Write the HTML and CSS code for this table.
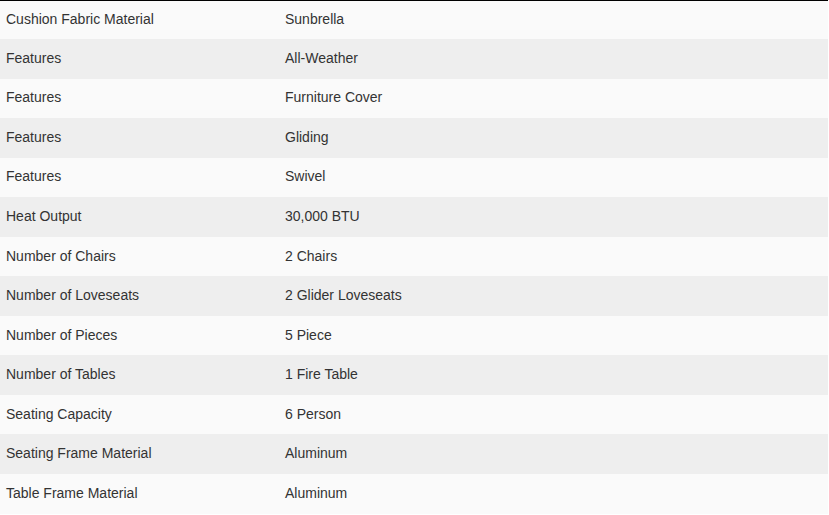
FILE: index.html
```html
<!DOCTYPE html>
<html>
<head>
<meta charset="utf-8">
<link rel="stylesheet" href="styles.css">
</head>
<body>
<table class="specs">
<tbody>
<tr><td class="k">Cushion Fabric Material</td><td>Sunbrella</td></tr>
<tr><td class="k">Features</td><td>All-Weather</td></tr>
<tr><td class="k">Features</td><td>Furniture Cover</td></tr>
<tr><td class="k">Features</td><td>Gliding</td></tr>
<tr><td class="k">Features</td><td>Swivel</td></tr>
<tr><td class="k">Heat Output</td><td>30,000 BTU</td></tr>
<tr><td class="k">Number of Chairs</td><td>2 Chairs</td></tr>
<tr><td class="k">Number of Loveseats</td><td>2 Glider Loveseats</td></tr>
<tr><td class="k">Number of Pieces</td><td>5 Piece</td></tr>
<tr><td class="k">Number of Tables</td><td>1 Fire Table</td></tr>
<tr><td class="k">Seating Capacity</td><td>6 Person</td></tr>
<tr><td class="k">Seating Frame Material</td><td>Aluminum</td></tr>
<tr><td class="k">Table Frame Material</td><td>Aluminum</td></tr>
</tbody>
</table>
</body>
</html>
```
FILE: styles.css
```css
html, body {
  margin: 0;
  padding: 0;
  background: #fff;
}
.specs {
  width: 828px;
  border-collapse: collapse;
  border-top: 1px solid #000;
  font-family: "Liberation Sans", Arial, sans-serif;
  font-size: 14px;
  color: #333;
}
.specs tr {
  background: #fafafa;
}
.specs tr:nth-child(even) {
  background: #eeeeee;
}
.specs td {
  height: 39.55px;
  padding: 0 6px 2px;
  box-sizing: border-box;
  vertical-align: middle;
  line-height: 16px;
}
.specs tr:first-child td {
  height: 38.5px;
}
.specs td.k {
  width: 279px;
}
```
